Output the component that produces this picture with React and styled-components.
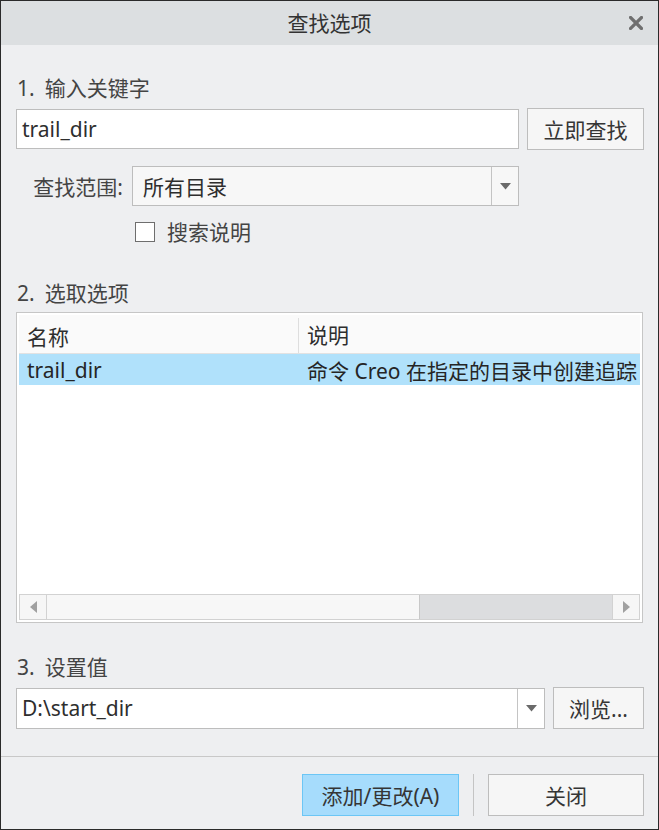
import React from "react";
import styled, { createGlobalStyle } from "styled-components";

const GlobalStyle = createGlobalStyle`
  html, body {
    margin: 0;
    padding: 0;
    background: #ffffff;
  }
  body {
    font-family: "Noto Sans", "Noto Sans CJK SC", sans-serif;
  }
`;

const Window = styled.div`
  width: 659px;
  height: 830px;
  box-sizing: border-box;
  border: 1px solid #2a2a2a;
  background: #eeeff1;
  display: flex;
  flex-direction: column;
  color: #3a3a3a;
  font-size: 21px;
`;

const TitleBar = styled.div`
  height: 44px;
  flex-shrink: 0;
  background: #dcdfe1;
  display: grid;
  grid-template-columns: 1fr auto 1fr;
  align-items: center;
`;

const Title = styled.div`
  grid-column: 2;
  color: #333;
  line-height: 24px;
`;

const CloseButton = styled.div`
  grid-column: 3;
  justify-self: end;
  width: 14px;
  height: 14px;
  margin-right: 15px;
  display: flex;
`;

const Content = styled.div`
  flex: 1;
  display: flex;
  flex-direction: column;
  padding: 0 14px 0 15px;
`;

const SectionLabel = styled.div`
  line-height: 24px;
  margin-top: ${(p) => p.$top}px;
  color: #444;
  padding-left: 1px;
  span {
    margin-right: 10px;
  }
`;

const Row = styled.div`
  display: flex;
  align-items: center;
  gap: 8px;
  margin-top: ${(p) => p.$top}px;
`;

const TextInput = styled.div`
  flex: 1;
  height: 40px;
  box-sizing: border-box;
  border: 1px solid #bdbdbd;
  background: #ffffff;
  display: flex;
  align-items: center;
  padding-left: 5px;
  color: #2e2e2e;
`;

const Button = styled.div`
  width: ${(p) => p.$w}px;
  height: 42px;
  box-sizing: border-box;
  border: 1px solid ${(p) => (p.$primary ? "#6cc6f5" : "#bdbdbd")};
  background: ${(p) => (p.$primary ? "#a6dcfc" : "#f6f6f6")};
  display: flex;
  align-items: center;
  justify-content: center;
  color: #353535;
`;

const ScopeRow = styled.div`
  display: grid;
  grid-template-columns: 107px 387px;
  column-gap: 9px;
  align-items: center;
  margin-top: 16px;
`;

const ScopeLabel = styled.div`
  text-align: right;
  color: #444;
`;

const Combo = styled.div`
  height: ${(p) => p.$h || 40}px;
  flex: 1;
  box-sizing: border-box;
  border: 1px solid #bdbdbd;
  background: ${(p) => (p.$light ? "#f7f7f7" : "#ffffff")};
  display: flex;
  align-items: stretch;
`;

const ComboText = styled.div`
  flex: 1;
  display: flex;
  align-items: center;
  padding-left: ${(p) => p.$pad || 10}px;
  color: #2e2e2e;
`;

const ComboArrow = styled.div`
  width: 26px;
  border-left: 1px solid #c4c4c4;
  display: flex;
  align-items: center;
  justify-content: center;
`;

const CheckRow = styled.label`
  display: flex;
  align-items: center;
  gap: 12px;
  margin-top: 15px;
  padding-left: 119px;
  color: #444;
  line-height: 22px;
`;

const CheckBox = styled.span`
  width: 20px;
  height: 20px;
  box-sizing: border-box;
  border: 1px solid #6e6e6e;
  background: #ffffff;
`;

const List = styled.div`
  margin-top: 7px;
  margin-right: 1px;
  height: 311px;
  box-sizing: border-box;
  border: 1px solid #c6c6c6;
  background: #ffffff;
  padding: 2px;
  display: flex;
  flex-direction: column;
`;

const ListHeader = styled.div`
  display: flex;
  height: 38px;
  background: #fafafa;
  border-bottom: 1px solid #e2e2e2;
`;

const HeaderCell = styled.div`
  width: ${(p) => (p.$w ? `${p.$w}px` : "auto")};
  flex: ${(p) => (p.$w ? "none" : 1)};
  display: flex;
  align-items: center;
  padding-left: ${(p) => p.$pad}px;
  box-sizing: border-box;
  border-right: ${(p) => (p.$divider ? "1px solid #dedede" : "none")};
  color: #2e2e2e;
  margin: ${(p) => (p.$divider ? "3px 0 0" : "0")};
`;

const ListRow = styled.div`
  display: flex;
  height: 31px;
  background: ${(p) => (p.$selected ? "#b0e1fb" : "transparent")};
  white-space: nowrap;
  overflow: hidden;
`;

const Cell = styled.div`
  width: ${(p) => (p.$w ? `${p.$w}px` : "auto")};
  flex: ${(p) => (p.$w ? "none" : 1)};
  min-width: 0;
  display: flex;
  align-items: center;
  padding-left: ${(p) => p.$pad}px;
  box-sizing: border-box;
  color: #252525;
  overflow: hidden;
`;

const ListBody = styled.div`
  flex: 1;
`;

const ScrollBar = styled.div`
  height: 26px;
  display: flex;
  background: #dcdddf;
  box-sizing: border-box;
  border: 1px solid #d2d2d2;
`;

const ScrollArrow = styled.div`
  width: 26px;
  background: #f6f6f6;
  display: flex;
  align-items: center;
  justify-content: center;
  border-${(p) => (p.$side === "left" ? "right" : "left")}: 1px solid #d2d2d2;
`;

const ScrollThumb = styled.div`
  width: 372px;
  background: #f7f7f7;
  border-right: 1px solid #c8c8c8;
`;

const ScrollTrack = styled.div`
  flex: 1;
`;

const Footer = styled.div`
  height: 73px;
  box-sizing: border-box;
  flex-shrink: 0;
  border-top: 1px solid #c8c8c8;
  display: flex;
  justify-content: flex-end;
  align-items: flex-start;
  padding: 17px 14px 0 0;
  gap: 14px;
`;

const FooterDivider = styled.div`
  width: 1px;
  height: 42px;
  background: #c4c4c4;
`;

const Triangle = ({ dir = "down", color = "#6a6a6a" }) => {
  if (dir === "down")
    return (
      <svg width="11" height="7" viewBox="0 0 11 7">
        <polygon points="0,0 11,0 5.5,6.5" fill={color} />
      </svg>
    );
  if (dir === "left")
    return (
      <svg width="7" height="12" viewBox="0 0 7 12">
        <polygon points="7,0 7,12 0,6" fill={color} />
      </svg>
    );
  return (
    <svg width="7" height="12" viewBox="0 0 7 12">
      <polygon points="0,0 0,12 7,6" fill={color} />
    </svg>
  );
};

export default function App() {
  return (
    <>
      <GlobalStyle />
      <Window>
        <TitleBar>
          <Title>查找选项</Title>
          <CloseButton>
            <svg width="14" height="14" viewBox="0 0 14 14">
              <path
                d="M1.5 1.5 L12.5 12.5 M12.5 1.5 L1.5 12.5"
                stroke="#6f6f6f"
                strokeWidth="3.2"
                strokeLinecap="square"
              />
            </svg>
          </CloseButton>
        </TitleBar>

        <Content>
          <SectionLabel $top={31}>
            <span>1.</span>输入关键字
          </SectionLabel>
          <Row $top={8}>
            <TextInput>trail_dir</TextInput>
            <Button $w={117}>立即查找</Button>
          </Row>

          <ScopeRow>
            <ScopeLabel>查找范围:</ScopeLabel>
            <Combo $light>
              <ComboText>所有目录</ComboText>
              <ComboArrow>
                <Triangle />
              </ComboArrow>
            </Combo>
          </ScopeRow>

          <CheckRow>
            <CheckBox />
            搜索说明
          </CheckRow>

          <SectionLabel $top={38}>
            <span>2.</span>选取选项
          </SectionLabel>
          <List>
            <ListHeader>
              <HeaderCell $w={280} $pad={8} $divider>
                名称
              </HeaderCell>
              <HeaderCell $pad={8}>说明</HeaderCell>
            </ListHeader>
            <ListRow $selected>
              <Cell $w={280} $pad={8}>
                trail_dir
              </Cell>
              <Cell $pad={8}>命令 Creo 在指定的目录中创建追踪</Cell>
            </ListRow>
            <ListBody />
            <ScrollBar>
              <ScrollArrow $side="left">
                <Triangle dir="left" color="#a0a0a0" />
              </ScrollArrow>
              <ScrollThumb />
              <ScrollTrack />
              <ScrollArrow $side="right">
                <Triangle dir="right" color="#a0a0a0" />
              </ScrollArrow>
            </ScrollBar>
          </List>

          <SectionLabel $top={32}>
            <span>3.</span>设置值
          </SectionLabel>
          <Row $top={8}>
            <Combo $h={41}>
              <ComboText $pad={5}>D:\start_dir</ComboText>
              <ComboArrow>
                <Triangle />
              </ComboArrow>
            </Combo>
            <Button $w={91}>浏览...</Button>
          </Row>
        </Content>

        <Footer>
          <Button $w={157} $primary>
            添加/更改(A)
          </Button>
          <FooterDivider />
          <Button $w={156}>关闭</Button>
        </Footer>
      </Window>
    </>
  );
}
